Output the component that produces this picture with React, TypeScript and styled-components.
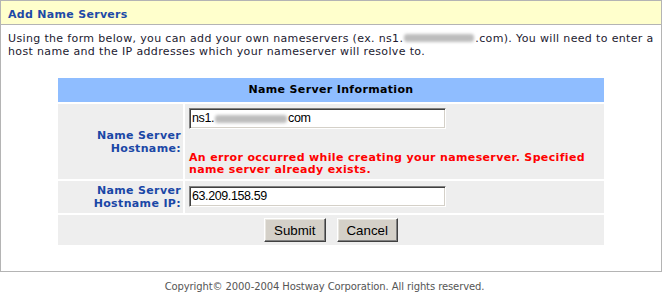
import styled, { createGlobalStyle } from 'styled-components'

const GlobalStyle = createGlobalStyle`
  body {
    margin: 0;
    background: #ffffff;
    font-family: "DejaVu Sans", Verdana, sans-serif;
  }
`

const Panel = styled.div`
  width: 662px;
  box-sizing: border-box;
  border: 1px solid #b4b4b4;
  background: #ffffff;
`

const PanelHeader = styled.div`
  background: #ffffcc;
  border-bottom: 1px solid #b4b4b4;
  padding: 7px 7px 3px;
  font-size: 11px;
  line-height: 13px;
  letter-spacing: 0.3px;
  font-weight: bold;
  color: #1d4aa7;
`

const Intro = styled.p`
  margin: 0;
  padding: 7px 7px 0;
  font-size: 11px;
  line-height: 13px;
  letter-spacing: 0.35px;
  color: #221a30;
`

// blurred-out domain name, drawn as a soft grey smudge
const Smudge = styled.span<{ $w: number }>`
  display: inline-block;
  width: ${(p) => p.$w}px;
  height: 8px;
  margin: 0 1px;
  border-radius: 3px;
  background: #bdbdbd;
  filter: blur(1.8px);
  vertical-align: 0;
`

const FormTable = styled.div`
  display: grid;
  grid-template-columns: 125px 1fr;
  gap: 2px;
  width: 546px;
  margin: 20px auto 26px;
  font-size: 11px;
  line-height: 13px;
  letter-spacing: 0.35px;
`

const TableHead = styled.div`
  grid-column: 1 / -1;
  height: 24px;
  box-sizing: border-box;
  padding-top: 5px;
  background: #8fbdff;
  text-align: center;
  font-weight: bold;
  color: #000000;
`

const LabelCell = styled.div`
  display: flex;
  align-items: center;
  justify-content: flex-end;
  padding-right: 2px;
  background: #eeeeee;
  text-align: right;
  font-weight: bold;
  color: #1a47a6;
`

const ValueCell = styled.div<{ $pad: string }>`
  padding: ${(p) => p.$pad};
  background: #eeeeee;
`

const TextBox = styled.div`
  display: flex;
  align-items: center;
  width: 257px;
  height: 21px;
  box-sizing: border-box;
  padding: 0 2px;
  background: #ffffff;
  border-top: 1px solid #808080;
  border-left: 1px solid #808080;
  border-bottom: 1px solid #ffffff;
  border-right: 1px solid #ffffff;
  box-shadow: inset 1px 1px 0 #404040, inset -1px -1px 0 #d4d0c8;
  font-family: "Liberation Sans", Arial, sans-serif;
  font-size: 12.5px;
  letter-spacing: -0.4px;
  color: #000000;
  white-space: nowrap;
`

const ErrorText = styled.div`
  margin-top: 23px;
  color: #ff0000;
  font-weight: bold;
  line-height: 12px;
`

const ButtonRow = styled.div`
  grid-column: 1 / -1;
  height: 30px;
  display: flex;
  align-items: center;
  justify-content: center;
  gap: 11px;
  background: #eeeeee;
`

const Button = styled.button`
  height: 24px;
  padding: 0 9px;
  background: #d4d0c8;
  border-top: 1px solid #ffffff;
  border-left: 1px solid #ffffff;
  border-bottom: 1px solid #404040;
  border-right: 1px solid #404040;
  box-shadow: inset -1px -1px 0 #808080, inset 1px 1px 0 #e8e6e0;
  font-family: "Liberation Sans", Arial, sans-serif;
  font-size: 13.3px;
  color: #000000;
`

const Footer = styled.div`
  margin-top: 9px;
  padding-right: 13px;
  text-align: center;
  font-size: 10px;
  line-height: 12px;
  letter-spacing: -0.1px;
  color: #555555;
`

export default function App() {
  return (
    <>
      <GlobalStyle />
      <Panel>
        <PanelHeader>Add Name Servers</PanelHeader>
        <Intro>
          Using the form below, you can add your own nameservers (ex. ns1.
          <Smudge $w={70} />
          .com). You will need to enter a
          <br />
          host name and the IP addresses which your nameserver will resolve to.
        </Intro>
        <FormTable>
          <TableHead>Name Server Information</TableHead>

          <LabelCell>
            Name Server
            <br />
            Hostname:
          </LabelCell>
          <ValueCell $pad="4px 4px 3px">
            <TextBox>
              ns1.
              <Smudge $w={72} />
              com
            </TextBox>
            <ErrorText>
              An error occurred while creating your nameserver. Specified
              <br />
              name server already exists.
            </ErrorText>
          </ValueCell>

          <LabelCell>
            Name Server
            <br />
            Hostname IP:
          </LabelCell>
          <ValueCell $pad="5px 4px 6px">
            <TextBox>63.209.158.59</TextBox>
          </ValueCell>

          <ButtonRow>
            <Button>Submit</Button>
            <Button>Cancel</Button>
          </ButtonRow>
        </FormTable>
      </Panel>
      <Footer>Copyright© 2000-2004 Hostway Corporation. All rights reserved.</Footer>
    </>
  )
}
